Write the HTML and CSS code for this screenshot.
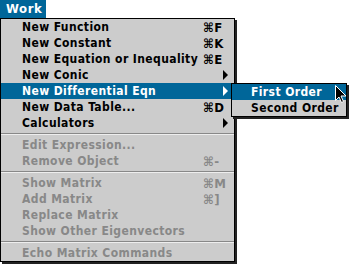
FILE: index.html
```html
<!DOCTYPE html>
<html lang="en">
<head>
  <meta charset="UTF-8">
  <title>Work Menu</title>
  <link rel="stylesheet" href="styles.css">
</head>
<body>
  <!-- Menu bar title -->
  <div class="menubar">
    <span class="menu-title">Work</span>
  </div>

  <!-- Pulled-down menu -->
  <div class="menu">
    <div class="item"><span class="label">New Function</span><span class="key">&#8984;F</span></div>
    <div class="item"><span class="label">New Constant</span><span class="key">&#8984;K</span></div>
    <div class="item"><span class="label">New Equation or Inequality</span><span class="key">&#8984;E</span></div>
    <div class="item"><span class="label">New Conic</span><span class="key"><span class="arrow"></span></span></div>
    <div class="item selected"><span class="label">New Differential Eqn</span><span class="key"><span class="arrow"></span></span></div>
    <div class="item"><span class="label">New Data Table...</span><span class="key">&#8984;D</span></div>
    <div class="item"><span class="label">Calculators</span><span class="key"><span class="arrow"></span></span></div>
    <div class="sep"></div>
    <div class="item disabled"><span class="label">Edit Expression...</span><span class="key"></span></div>
    <div class="item disabled"><span class="label">Remove Object</span><span class="key">&#8984;-</span></div>
    <div class="sep"></div>
    <div class="item disabled"><span class="label">Show Matrix</span><span class="key">&#8984;M</span></div>
    <div class="item disabled"><span class="label">Add Matrix</span><span class="key">&#8984;]</span></div>
    <div class="item disabled"><span class="label">Replace Matrix</span><span class="key"></span></div>
    <div class="item disabled"><span class="label">Show Other Eigenvectors</span><span class="key"></span></div>
    <div class="sep"></div>
    <div class="item disabled"><span class="label">Echo Matrix Commands</span><span class="key"></span></div>
  </div>

  <!-- Submenu for New Differential Eqn -->
  <div class="submenu">
    <div class="item selected"><span class="label">First Order</span></div>
    <div class="item"><span class="label">Second Order</span></div>
  </div>

  <!-- Mouse pointer -->
  <svg class="cursor" width="12" height="19" viewBox="0 0 12 19">
    <path d="M0.5 0.5 L0.5 15.5 L4 12 L6.5 17.5 L8.5 16.5 L6 11 L11 11 Z" fill="#000" stroke="#fff" stroke-width="1"/>
  </svg>
</body>
</html>
```

FILE: styles.css
```css
body {
  margin: 0;
  background: #fff;
  font-family: "DejaVu Sans Condensed", "DejaVu Sans", sans-serif;
  font-weight: bold;
  font-size: 12px;
  position: relative;
  width: 349px;
  height: 264px;
  overflow: hidden;
}
/* Menu bar */
.menubar {
  height: 18px;
  display: flex;
}
.menu-title {
  background: #006699;
  color: #fff;
  width: 46px;
  padding-left: 6px;
  box-sizing: border-box;
  line-height: 18px;
  font-size: 13px;
  letter-spacing: 0.6px;
}
/* Main menu */
.menu {
  width: 235px;
  box-sizing: border-box;
  background: #cccccc;
  border: 1px solid #000;
  box-shadow: 2px 2px 0 #222;
}
.item {
  display: flex;
  align-items: center;
  height: 16px;
  padding: 0 6px 0 21px;
  color: #000;
  letter-spacing: 0.4px;
}
.item .label {
  flex: 1;
  white-space: nowrap;
}
.item .key {
  width: 25px;
  display: flex;
  align-items: center;
  font-size: 13px;
}
.item.selected {
  background: #006699;
  color: #fff;
}
.item.disabled {
  color: #888;
}
/* Submenu triangle */
.arrow {
  margin-left: auto;
  width: 0;
  height: 0;
  border-top: 5px solid transparent;
  border-bottom: 5px solid transparent;
  border-left: 5px solid #000;
}
.selected .arrow {
  border-left-color: #fff;
}
.sep {
  height: 6px;
  display: flex;
  flex-direction: column;
  justify-content: center;
}
.sep::before {
  content: "";
  border-top: 1px solid #888;
  border-bottom: 1px solid #eee;
}
/* Submenu overlapping the main menu */
.submenu {
  position: absolute;
  left: 231px;
  top: 83px;
  width: 116px;
  box-sizing: border-box;
  background: #cccccc;
  border: 1px solid #000;
  box-shadow: 2px 2px 0 #222;
}
.submenu .item {
  padding: 0 0 0 19px;
}
.cursor {
  position: absolute;
  left: 335px;
  top: 85px;
}
```
